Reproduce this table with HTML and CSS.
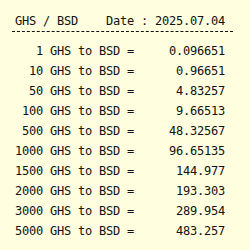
FILE: index.html
```html
<!doctype html>
<html lang="en">
<head>
    <meta charset="utf-8">
    <meta name="viewport" content="width=device-width, initial-scale=1">
    <title>GHS / BSD rates</title>
    <link rel="stylesheet" href="styles.css">
</head>
<body>

<main class="rates">
    <div class="rates-head">
        <span>GHS / BSD</span>
        <span>Date : 2025.07.04</span>
    </div>
    <div class="rates-list">
        <div class="row"><span class="amount">1 GHS to BSD</span><span class="eq">=</span><span class="value">0.096651</span></div>
        <div class="row"><span class="amount">10 GHS to BSD</span><span class="eq">=</span><span class="value">0.96651</span></div>
        <div class="row"><span class="amount">50 GHS to BSD</span><span class="eq">=</span><span class="value">4.83257</span></div>
        <div class="row"><span class="amount">100 GHS to BSD</span><span class="eq">=</span><span class="value">9.66513</span></div>
        <div class="row"><span class="amount">500 GHS to BSD</span><span class="eq">=</span><span class="value">48.32567</span></div>
        <div class="row"><span class="amount">1000 GHS to BSD</span><span class="eq">=</span><span class="value">96.65135</span></div>
        <div class="row"><span class="amount">1500 GHS to BSD</span><span class="eq">=</span><span class="value">144.977</span></div>
        <div class="row"><span class="amount">2000 GHS to BSD</span><span class="eq">=</span><span class="value">193.303</span></div>
        <div class="row"><span class="amount">3000 GHS to BSD</span><span class="eq">=</span><span class="value">289.954</span></div>
        <div class="row"><span class="amount">5000 GHS to BSD</span><span class="eq">=</span><span class="value">483.257</span></div>
    </div>
</main>

</body>
</html>
```

FILE: styles.css
```css
*, *:before, *:after {
    box-sizing: border-box;
    margin: 0;
    padding: 0;
}

body {
    font-family: "DejaVu Sans Mono", "Liberation Mono", monospace;
    font-size: 12px;
    letter-spacing: -0.22px;
    line-height: 20px;
    background: #ffffe0;
    color: #111;
    min-height: 100vh;
    white-space: nowrap;
}

.rates {
    width: 221px;
    margin-left: 12px;
    padding-top: 11px;
}

.rates-head {
    display: flex;
    justify-content: space-between;
    padding: 0 8px 0 3px;
    border-bottom: 1px dashed #111;
}

.rates-list {
    margin-top: 9px;
    padding-left: 3px;
}

.row {
    display: grid;
    grid-template-columns: 105px 14px 91px;
}

.amount,
.eq,
.value {
    text-align: right;
}
```
